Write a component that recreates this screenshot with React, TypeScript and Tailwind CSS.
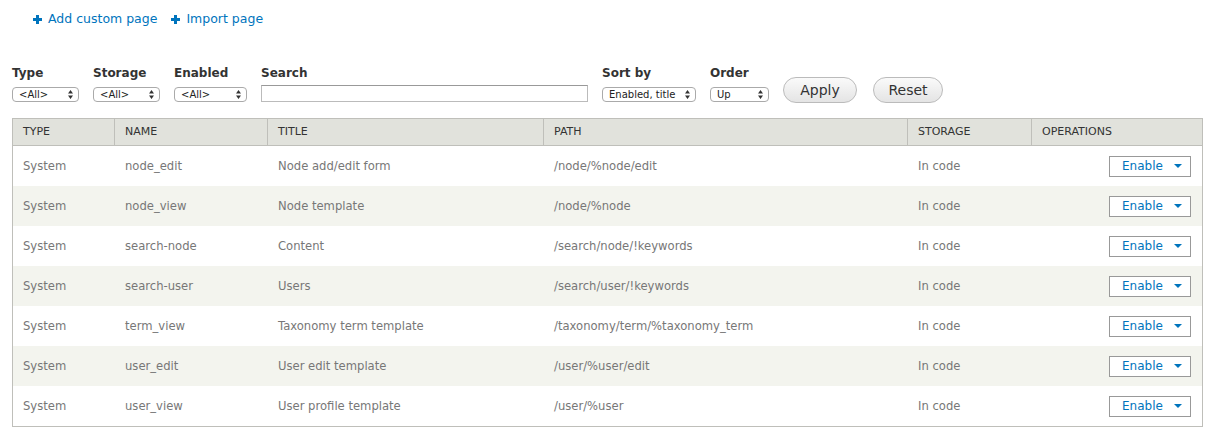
import React from "react";

const rows = [
  ["System", "node_edit", "Node add/edit form", "/node/%node/edit", "In code"],
  ["System", "node_view", "Node template", "/node/%node", "In code"],
  ["System", "search-node", "Content", "/search/node/!keywords", "In code"],
  ["System", "search-user", "Users", "/search/user/!keywords", "In code"],
  ["System", "term_view", "Taxonomy term template", "/taxonomy/term/%taxonomy_term", "In code"],
  ["System", "user_edit", "User edit template", "/user/%user/edit", "In code"],
  ["System", "user_view", "User profile template", "/user/%user", "In code"],
];

const Plus = () => (
  <svg width="9" height="9" viewBox="0 0 9 9" className="mr-[6px]">
    <path d="M3 0h3v3h3v3H6v3H3V6H0V3h3z" fill="#0074bd" />
  </svg>
);

const Arrows = () => (
  <svg width="5" height="9" viewBox="0 0 5 9">
    <path d="M2.5 0L5 3.5H0z M2.5 9L5 5.5H0z" fill="#333" />
  </svg>
);

const Select = ({ label, width }: { label: string; width: string }) => (
  <div
    className={`${width} mt-[6px] h-[15px] flex items-center justify-between rounded-[4px] border border-[#aaa] bg-white pl-[6px] pr-[5px] text-[10px] leading-none text-[#222]`}
  >
    <span>{label}</span>
    <Arrows />
  </div>
);

const Filter = ({ label, children }: { label: string; children: React.ReactNode }) => (
  <div className="flex flex-col">
    <span className="text-[12px] font-bold text-[#333] leading-[16px]">{label}</span>
    {children}
  </div>
);

const cols = ["w-[102px]", "w-[153px]", "w-[276px]", "w-[364px]", "w-[124px]", ""];
const heads = ["TYPE", "NAME", "TITLE", "PATH", "STORAGE", "OPERATIONS"];

export default function App() {
  return (
    <div className="w-[1216px] h-[436px] bg-white font-['DejaVu_Sans',sans-serif]">
      <div className="flex items-center pt-[10px] pl-[33px] text-[12.5px] text-[#0074bd] h-[29px]">
        <a className="flex items-center">
          <Plus />
          Add custom page
        </a>
        <a className="flex items-center ml-[14px]">
          <Plus />
          Import page
        </a>
      </div>

      <div className="flex items-start pl-[12px] mt-[36px] gap-[14px] h-[38px]">
        <Filter label="Type">
          <Select label="<All>" width="w-[67px]" />
        </Filter>
        <Filter label="Storage">
          <Select label="<All>" width="w-[67px]" />
        </Filter>
        <Filter label="Enabled">
          <Select label="<All>" width="w-[73px]" />
        </Filter>
        <Filter label="Search">
          <div className="mt-[4px] w-[327px] h-[17px] border border-[#bbb] border-t-[#999] bg-white" />
        </Filter>
        <Filter label="Sort by">
          <Select label="Enabled, title" width="w-[94px]" />
        </Filter>
        <Filter label="Order">
          <Select label="Up" width="w-[59px]" />
        </Filter>
        <button className="mt-[12px] w-[74px] h-[26px] rounded-full border border-[#bbb] bg-gradient-to-b from-[#fafafa] to-[#e4e4e4] text-[14px] text-[#333] leading-none">
          Apply
        </button>
        <button className="mt-[12px] ml-[2px] w-[70px] h-[26px] rounded-full border border-[#bbb] bg-gradient-to-b from-[#fafafa] to-[#e4e4e4] text-[14px] text-[#333] leading-none">
          Reset
        </button>
      </div>

      <div className="ml-[12px] mt-[15px] w-[1191px] border border-[#bfbfba]">
        <div className="flex h-[27px] bg-[#e1e2dc] border-b border-[#bfbfba] text-[11px] text-[#333]">
          {heads.map((h, i) => (
            <div
              key={h}
              className={`${cols[i]} ${i < 5 ? "border-r border-[#bfbfba]" : "flex-1"} flex items-center pl-[10px] pt-[1px]`}
            >
              {h}
            </div>
          ))}
        </div>
        {rows.map((r, ri) => (
          <div
            key={r[1]}
            className={`flex h-[40px] items-center text-[11.6px] text-[#777] ${ri % 2 ? "bg-[#f3f4ee]" : "bg-white"}`}
          >
            {r.map((c, i) => (
              <div key={i} className={`${cols[i]} pl-[10px] pt-[1px]`}>
                {c}
              </div>
            ))}
            <div className="flex-1 flex justify-end pr-[11px]">
              <div className="w-[82px] h-[21px] border border-[#999] bg-white flex items-center text-[#0074bd] text-[12px]">
                <span className="pl-[12px]">Enable</span>
                <svg width="8" height="4" viewBox="0 0 8 4" className="ml-auto mr-[8px]">
                  <path d="M0 0h8L4 4z" fill="#0074bd" />
                </svg>
              </div>
            </div>
          </div>
        ))}
      </div>
    </div>
  );
}
